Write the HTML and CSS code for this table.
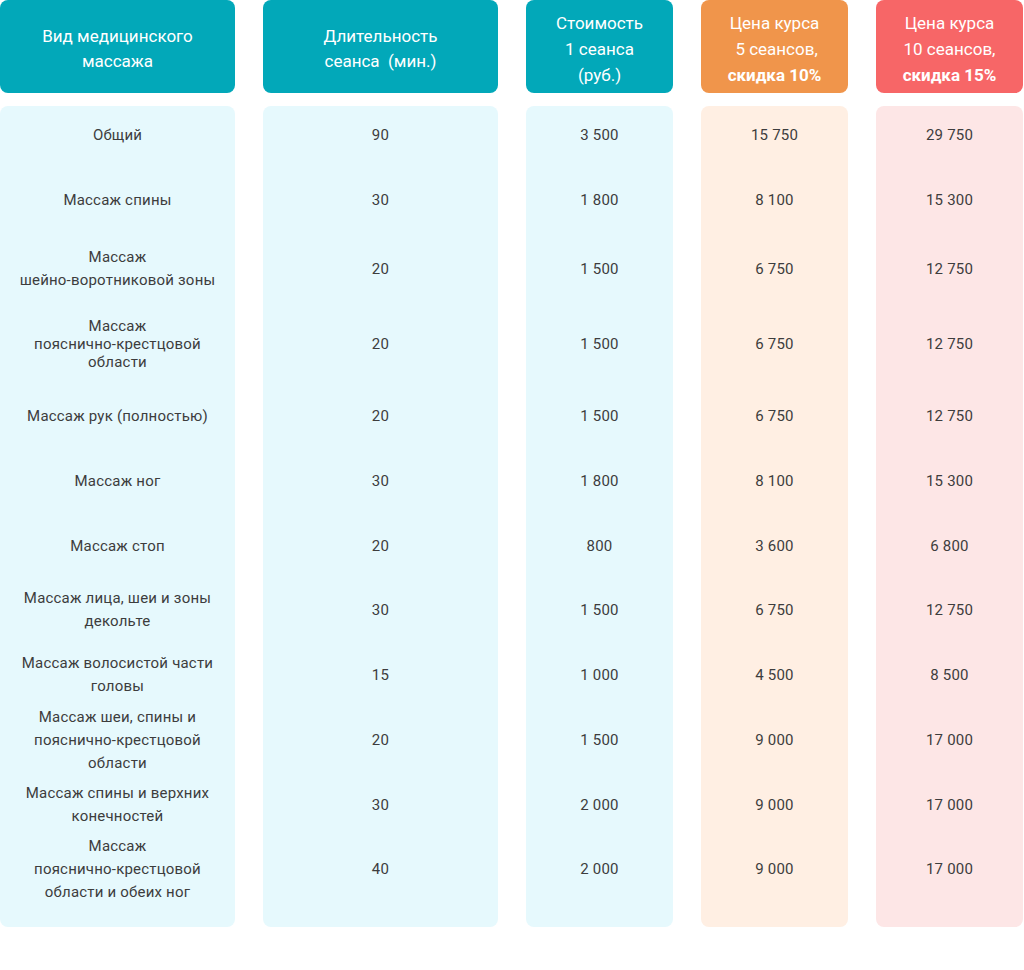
FILE: index.html
```html
<!DOCTYPE html>
<html lang="ru">
<head>
<meta charset="utf-8">
<title>Прайс</title>
<link rel="stylesheet" href="styles.css">
</head>
<body>
<div class="head">
  <div class="hcell teal"><span>Вид медицинского<br>массажа</span></div>
  <div class="hcell teal"><span>Длительность<br>сеанса&nbsp; (мин.)</span></div>
  <div class="hcell teal tall"><span>Стоимость<br>1 сеанса<br>(руб.)</span></div>
  <div class="hcell orange tall"><span>Цена курса<br>&nbsp;5 сеансов,<br><b>скидка 10%</b></span></div>
  <div class="hcell red tall"><span>Цена курса<br>10 сеансов,<br><b>скидка 15%</b></span></div>
</div>
<div class="body">
  <div>Общий</div><div>90</div><div>3 500</div><div>15 750</div><div>29 750</div>
  <div>Массаж спины</div><div>30</div><div>1 800</div><div>8 100</div><div>15 300</div>
  <div>Массаж<br>шейно-воротниковой зоны</div><div>20</div><div>1 500</div><div>6 750</div><div>12 750</div>
  <div class="tight">Массаж<br>пояснично-крестцовой<br>области</div><div>20</div><div>1 500</div><div>6 750</div><div>12 750</div>
  <div>Массаж рук (полностью)</div><div>20</div><div>1 500</div><div>6 750</div><div>12 750</div>
  <div>Массаж ног</div><div>30</div><div>1 800</div><div>8 100</div><div>15 300</div>
  <div>Массаж стоп</div><div>20</div><div>800</div><div>3 600</div><div>6 800</div>
  <div>Массаж лица, шеи и зоны<br>декольте</div><div>30</div><div>1 500</div><div>6 750</div><div>12 750</div>
  <div>Массаж волосистой части<br>головы</div><div>15</div><div>1 000</div><div>4 500</div><div>8 500</div>
  <div>Массаж шеи, спины и<br>пояснично-крестцовой<br>области</div><div>20</div><div>1 500</div><div>9 000</div><div>17 000</div>
  <div>Массаж спины и верхних<br>конечностей</div><div>30</div><div>2 000</div><div>9 000</div><div>17 000</div>
  <div>Массаж<br>пояснично-крестцовой<br>области и обеих ног</div><div>40</div><div>2 000</div><div>9 000</div><div>17 000</div>
</div>
</body>
</html>
```

FILE: styles.css
```css
html, body {
  margin: 0;
  padding: 0;
  background: #ffffff;
}
body {
  font-family: Roboto, "Liberation Sans", Arial, sans-serif;
  width: 1024px;
}
.head {
  display: grid;
  grid-template-columns: 235px 235px 147px 147px 147px;
  grid-template-rows: 93px;
  column-gap: 28px;
}
.hcell {
  border-radius: 8px;
  color: #ffffff;
  font-size: 17px;
  line-height: 25px;
  text-align: center;
  display: flex;
  align-items: center;
  justify-content: center;
  padding-top: 4px;
  box-sizing: border-box;
}
.hcell.tall {
  line-height: 26px;
  padding-top: 5px;
}
.hcell b {
  font-weight: 700;
}
.teal { background: #02a8b9; }
.orange { background: #f0954b; }
.red { background: #f76667; }

.body {
  margin-top: 13px;
  display: grid;
  grid-template-columns: 235px 235px 147px 147px 147px;
  grid-template-rows: 59px 70px 68px 82px 62px 68px 62px 66px 64px 66px 64px 90px;
  column-gap: 28px;
  font-size: 15px;
  letter-spacing: 0.2px;
  line-height: 23px;
  color: #3d3d3d;
}
.body > div {
  display: flex;
  align-items: center;
  justify-content: center;
  text-align: center;
  background: #e6f9fd;
}
.body > div.tight {
  line-height: 18px;
}
.body > div:nth-child(5n+4) { background: #ffefe3; }
.body > div:nth-child(5n) { background: #fde6e6; }
.body > div:nth-child(-n+5) {
  border-top-left-radius: 8px;
  border-top-right-radius: 8px;
}
.body > div:nth-last-child(-n+5) {
  border-bottom-left-radius: 8px;
  border-bottom-right-radius: 8px;
  padding-bottom: 26px;
}
```
